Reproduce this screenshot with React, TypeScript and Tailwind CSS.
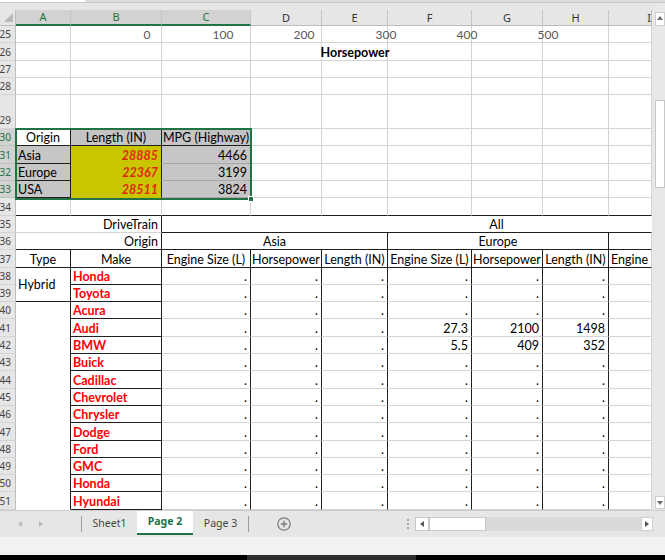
import React from 'react'

type Edge = 'g' | 'k' | 'n' | 'l'
type Align = 'l' | 'c' | 'r'

const RIGHT: Record<Edge, string> = {
  g: 'border-r-[#d4d4d4]',
  k: 'border-r-[#1f1f1f]',
  n: 'border-r-transparent',
  l: 'border-r-[#a8a8a8]',
}

const BOTTOM: Record<Edge, string> = {
  g: 'border-b-[#d4d4d4]',
  k: 'border-b-[#1f1f1f]',
  n: 'border-b-transparent',
  l: 'border-b-[#a8a8a8]',
}

const MAKES = [
  'Honda',
  'Toyota',
  'Acura',
  'Audi',
  'BMW',
  'Buick',
  'Cadillac',
  'Chevrolet',
  'Chrysler',
  'Dodge',
  'Ford',
  'GMC',
  'Honda',
  'Hyundai',
]

// europe values, keyed by row index in MAKES
const EUROPE: Record<number, string[]> = {
  3: ['27.3', '2100', '1498'],
  4: ['5.5', '409', '352'],
}

interface CellProps {
  children?: React.ReactNode
  r?: Edge
  b?: Edge
  align?: Align
  middle?: boolean
  className?: string
}

function Cell({ children, r = 'g', b = 'g', align = 'l', middle = false, className = '' }: CellProps): JSX.Element {
  const justify =
    align === 'r' ? 'justify-end pr-[3px]' : align === 'c' ? 'justify-center' : 'justify-start pl-[2px]'
  return (
    <div
      className={`flex overflow-hidden whitespace-nowrap border-r border-b leading-[15px] ${
        middle ? 'items-center' : 'items-end'
      } ${RIGHT[r]} ${BOTTOM[b]} ${justify} ${className}`}
    >
      {children}
    </div>
  )
}

function RowHead({ n, sel = false }: { n: number; sel?: boolean }): JSX.Element {
  return (
    <div
      className={`flex items-end justify-end overflow-hidden border-r border-b pr-[4px] pb-[1px] font-['Noto_Sans',sans-serif] text-[10px] leading-[14px] ${
        sel
          ? 'border-r-[#217346] border-b-[#b5c7ba] bg-[#d2d2d2] text-[#217346]'
          : 'border-r-[#bdbdbd] border-b-[#d4d4d4] bg-[#e6e6e6] text-[#444]'
      }`}
    >
      {n}
    </div>
  )
}

function ColHead({ label, sel = false, right = false }: { label: string; sel?: boolean; right?: boolean }): JSX.Element {
  return (
    <div
      className={`flex items-center overflow-hidden border-r border-r-[#c4c4c4] font-['Noto_Sans',sans-serif] text-[11px] leading-[14px] ${
        right ? 'justify-end' : 'justify-center'
      } ${
        sel
          ? 'border-b-2 border-b-[#217346] bg-[#d2d2d2] text-[#217346]'
          : 'border-b border-b-[#bdbdbd] bg-[#e6e6e6] text-[#333]'
      }`}
    >
      {label}
    </div>
  )
}

function Blank({ n }: { n: number }): JSX.Element {
  return (
    <>
      {Array.from({ length: n }).map((_, i) => (
        <Cell key={i} />
      ))}
    </>
  )
}

function Sheet(): JSX.Element {
  return (
    <div className="relative h-[500px] overflow-hidden">
      <div className="grid grid-cols-[16px_55px_91px_89px_71px_66px_84px_71px_66px_43px] grid-rows-[16px_repeat(4,17.3px)_34px_repeat(22,17.3px)] text-[12.5px] text-black">
        {/* column headers */}
        <div className="relative border-r border-b border-r-[#bdbdbd] border-b-[#bdbdbd] bg-[#e6e6e6]">
          <svg className="absolute left-[4px] top-[3px]" width="10" height="10" viewBox="0 0 10 10">
            <polygon points="9,0 9,9 0,9" fill="#b8b8b8" />
          </svg>
        </div>
        <ColHead label="A" sel />
        <ColHead label="B" sel />
        <ColHead label="C" sel />
        <ColHead label="D" />
        <ColHead label="E" />
        <ColHead label="F" />
        <ColHead label="G" />
        <ColHead label="H" />
        <ColHead label="I" right />

        {/* rows 25 - 28, chart area */}
        {[25, 26, 27, 28].map((n) => (
          <React.Fragment key={n}>
            <RowHead n={n} />
            <Blank n={9} />
          </React.Fragment>
        ))}

        {/* row 29 */}
        <RowHead n={29} />
        <Cell b="k" />
        <Cell b="k" />
        <Cell b="k" />
        <Blank n={6} />

        {/* row 30 */}
        <RowHead n={30} sel />
        <Cell r="k" b="k" align="c" className="bg-white">
          Origin
        </Cell>
        <Cell r="k" b="k" align="c" className="bg-[#c4c4c4]">
          Length (IN)
        </Cell>
        <Cell r="k" b="k" align="c" className="bg-[#c4c4c4]">
          MPG (Highway)
        </Cell>
        <Blank n={6} />

        {/* rows 31 - 33 */}
        {[
          ['Asia', '28885', '4466'],
          ['Europe', '22367', '3199'],
          ['USA', '28511', '3824'],
        ].map(([origin, len, mpg], i) => (
          <React.Fragment key={origin}>
            <RowHead n={31 + i} sel />
            <Cell r="k" b="k" className="bg-[#c6c6c6]">
              {origin}
            </Cell>
            <Cell r="k" b="n" align="r" className="bg-[#c9c600] font-bold italic text-[#dd2a12]">
              {len}
            </Cell>
            <Cell r="l" b="l" align="r" className="bg-[#c6c6c6]">
              {mpg}
            </Cell>
            <Blank n={6} />
          </React.Fragment>
        ))}

        {/* row 34 */}
        <RowHead n={34} />
        {Array.from({ length: 9 }).map((_, i) => (
          <Cell key={i} b="k" />
        ))}

        {/* row 35 */}
        <RowHead n={35} />
        <Cell r="k" b="g" align="r" className="col-span-2">
          DriveTrain
        </Cell>
        <Cell r="n" b="k" align="c" className="col-span-7 pl-[180px]">
          All
        </Cell>

        {/* row 36 */}
        <RowHead n={36} />
        <Cell r="k" b="k" align="r" className="col-span-2">
          Origin
        </Cell>
        <Cell r="k" b="k" align="c" className="col-span-3">
          Asia
        </Cell>
        <Cell r="k" b="k" align="c" className="col-span-3">
          Europe
        </Cell>
        <Cell b="k" />

        {/* row 37 */}
        <RowHead n={37} />
        <Cell r="k" b="k" align="c">
          Type
        </Cell>
        <Cell r="k" b="k" align="c">
          Make
        </Cell>
        {['Engine Size (L)', 'Horsepower', 'Length (IN)', 'Engine Size (L)', 'Horsepower', 'Length (IN)'].map(
          (label, i) => (
            <Cell key={i} r="k" b="k" align="c">
              {label}
            </Cell>
          ),
        )}
        <Cell b="k">Engine</Cell>

        {/* rows 38 - 51 */}
        {MAKES.map((make, i) => {
          const europe = EUROPE[i]
          return (
            <React.Fragment key={i}>
              <RowHead n={38 + i} />
              {i === 0 ? (
                <Cell r="k" b="k" middle className="row-span-2">
                  Hybrid
                </Cell>
              ) : null}
              {i === 2 ? <Cell r="k" b="n" className="row-span-12" /> : null}
              <Cell r="k" b="k" className="font-bold text-[#ff0000]">
                {make}
              </Cell>
              {[0, 1, 2].map((j) => (
                <Cell key={`a${j}`} r="k" align="r">
                  .
                </Cell>
              ))}
              {[0, 1, 2].map((j) => (
                <Cell key={`e${j}`} r="k" align="r">
                  {europe ? europe[j] : '.'}
                </Cell>
              ))}
              <Cell />
            </React.Fragment>
          )
        })}
      </div>

      {/* chart remnants lying over the sheet */}
      <div className="pointer-events-none absolute inset-x-0 top-[17px] h-[15px] text-[12px] leading-[15px] text-[#595959]">
        <span className="absolute left-[147px] -translate-x-1/2">0</span>
        <span className="absolute left-[223px] -translate-x-1/2">100</span>
        <span className="absolute left-[304px] -translate-x-1/2">200</span>
        <span className="absolute left-[386px] -translate-x-1/2">300</span>
        <span className="absolute left-[467px] -translate-x-1/2">400</span>
        <span className="absolute left-[548px] -translate-x-1/2">500</span>
      </div>
      <div className="pointer-events-none absolute left-[355px] top-[35px] -translate-x-1/2 text-[12.5px] font-bold leading-[15px] text-black">
        Horsepower
      </div>

      {/* selection A30:C33 */}
      <div className="pointer-events-none absolute left-[15px] top-[118px] h-[71.5px] w-[237px] border-2 border-[#217346]" />
      <div className="pointer-events-none absolute left-[248px] top-[186px] h-[6px] w-[6px] border border-white bg-[#217346]" />
    </div>
  )
}

function VScroll(): JSX.Element {
  return (
    <div className="flex w-[13px] flex-col bg-[#e8e8e8] pt-[9px] pl-[3px]">
      <div className="flex h-[14px] items-start justify-center border border-[#cfcfcf] bg-white pt-[3px]">
        <svg width="6" height="4" viewBox="0 0 6 4">
          <polygon points="0,4 3,0 6,4" fill="#6a6a6a" />
        </svg>
      </div>
      <div className="h-[74px]" />
      <div className="h-[88px] border border-[#c8c8c8] bg-white" />
      <div className="flex-1" />
      <div className="mb-[1px] flex h-[13px] items-end justify-center border border-[#cfcfcf] bg-white pb-[3px]">
        <svg width="6" height="4" viewBox="0 0 6 4">
          <polygon points="0,0 6,0 3,4" fill="#6a6a6a" />
        </svg>
      </div>
    </div>
  )
}

function TabBar(): JSX.Element {
  return (
    <div className="flex h-[27px] border-t border-[#cdcdcd] bg-[#e6e6e6] font-['Noto_Sans',sans-serif] text-[10.5px] text-[#444]">
      <div className="flex w-[81px] items-center gap-[17px] pl-[18px]">
        <svg width="4" height="6" viewBox="0 0 4 6">
          <polygon points="4,0 4,6 0,3" fill="#b9b9b9" />
        </svg>
        <svg width="4" height="6" viewBox="0 0 4 6">
          <polygon points="0,0 0,6 4,3" fill="#b9b9b9" />
        </svg>
      </div>
      <div className="my-[5px] w-px bg-[#9c9c9c]" />
      <div className="flex w-[55px] items-center justify-center">Sheet1</div>
      <div className="mb-[2px] flex w-[56px] items-center justify-center border-b-2 border-[#217346] bg-white font-bold text-[#217346]">
        Page 2
      </div>
      <div className="flex w-[55px] items-center justify-center">Page 3</div>
      <div className="my-[5px] w-px bg-[#9c9c9c]" />
      <div className="flex w-[69px] items-center justify-center">
        <svg width="14" height="14" viewBox="0 0 14 14">
          <circle cx="7" cy="7" r="6.2" fill="none" stroke="#7a7a7a" strokeWidth="1.2" />
          <path d="M7 3.8v6.4M3.8 7h6.4" stroke="#7a7a7a" strokeWidth="1.4" />
        </svg>
      </div>
      <div className="w-[83px]" />
      <div className="flex w-[14px] flex-col items-center justify-center gap-[2px]">
        <div className="h-[2px] w-[2px] bg-[#a6a6a6]" />
        <div className="h-[2px] w-[2px] bg-[#a6a6a6]" />
        <div className="h-[2px] w-[2px] bg-[#a6a6a6]" />
      </div>
      <div className="my-[6px] flex w-[238px] bg-[#dadada]">
        <div className="flex w-[14px] items-center justify-center border border-[#c8c8c8] bg-white">
          <svg width="4" height="6" viewBox="0 0 4 6">
            <polygon points="4,0 4,6 0,3" fill="#555" />
          </svg>
        </div>
        <div className="w-[57px] border border-[#c8c8c8] bg-white" />
        <div className="flex-1" />
        <div className="flex w-[12px] items-center justify-center border border-[#d0d0d0] bg-white">
          <svg width="4" height="6" viewBox="0 0 4 6">
            <polygon points="0,0 0,6 4,3" fill="#555" />
          </svg>
        </div>
      </div>
    </div>
  )
}

export default function App(): JSX.Element {
  return (
    <div className="flex h-[560px] w-[665px] flex-col overflow-hidden bg-white font-[Lato,sans-serif]">
      <div className="flex h-[3px] border-b border-[#c8c8c8]">
        <div className="w-[85px] bg-white" />
        <div className="flex-1 bg-[#dcdcdc]" />
      </div>
      <div className="flex h-[507px]">
        <div className="flex w-[652px] flex-col">
          <div className="h-[7px] bg-[#e6e6e6]" />
          <Sheet />
        </div>
        <VScroll />
      </div>
      <TabBar />
      <div className="h-[18px] bg-[#f2f2f2]" />
      <div className="flex h-[5px]">
        <div className="w-[247px] bg-black" />
        <div className="w-[169px] bg-[#2e2e2e]" />
        <div className="flex-1 bg-black" />
      </div>
    </div>
  )
}
